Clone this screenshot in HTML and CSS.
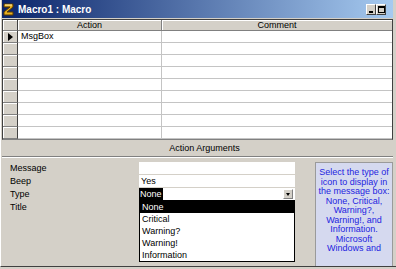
FILE: index.html
```html
<!DOCTYPE html>
<html lang="en">
  <head>
    <meta charset="UTF-8" />
    <title>Macro1 : Macro</title>
    <link rel="stylesheet" href="styles.css">
  </head>
  <body>
    <div class="window">
      <!-- Title bar -->
      <div class="titlebar">
        <svg class="app-icon" width="11" height="13" viewBox="0 0 11 13">
          <path d="M1 1 H10 V4 L4 9 H10 V12 H1 V9 L7 4 H1 Z" fill="#e8b020" stroke="#5a3a00" stroke-width="1" />
          <path d="M2 2 H9" stroke="#fff3b0" stroke-width="1" />
        </svg>
        <span class="title">Macro1 : Macro</span>
        <div class="caption-btns">
          <span class="cap-btn"><span class="min-glyph"></span></span>
          <span class="cap-btn"><span class="max-glyph"></span></span>
        </div>
      </div>

      <!-- Macro grid -->
      <div class="grid">
        <div class="row head">
          <div class="sel"></div>
          <div class="cell action">Action</div>
          <div class="cell comment">Comment</div>
        </div>
        <div class="row">
          <div class="sel"><span class="current"></span></div>
          <div class="cell action">MsgBox</div>
          <div class="cell comment"></div>
        </div>
        <div class="row"><div class="sel"></div><div class="cell action"></div><div class="cell comment"></div></div>
        <div class="row"><div class="sel"></div><div class="cell action"></div><div class="cell comment"></div></div>
        <div class="row"><div class="sel"></div><div class="cell action"></div><div class="cell comment"></div></div>
        <div class="row"><div class="sel"></div><div class="cell action"></div><div class="cell comment"></div></div>
        <div class="row"><div class="sel"></div><div class="cell action"></div><div class="cell comment"></div></div>
        <div class="row"><div class="sel"></div><div class="cell action"></div><div class="cell comment"></div></div>
        <div class="row"><div class="sel"></div><div class="cell action"></div><div class="cell comment"></div></div>
        <div class="row"><div class="sel"></div><div class="cell action"></div><div class="cell comment"></div></div>
      </div>

      <div class="args-title">Action Arguments</div>

      <!-- Arguments pane -->
      <div class="args">
        <div class="arg-labels">
          <div class="arg-label">Message</div>
          <div class="arg-label">Beep</div>
          <div class="arg-label">Type</div>
          <div class="arg-label">Title</div>
        </div>
        <div class="arg-fields">
          <div class="field"></div>
          <div class="field">Yes</div>
          <div class="field combo">
            <span class="selected-text">None</span>
            <span class="drop-btn"><span class="drop-arrow"></span></span>
            <div class="drop-list">
              <div class="drop-item active">None</div>
              <div class="drop-item">Critical</div>
              <div class="drop-item">Warning?</div>
              <div class="drop-item">Warning!</div>
              <div class="drop-item">Information</div>
            </div>
          </div>
          <div class="field"></div>
        </div>
        <div class="hint">
          Select the type of<br>
          icon to display in<br>
          the message box:<br>
          None, Critical,<br>
          Warning?,<br>
          Warning!, and<br>
          Information.<br>
          Microsoft<br>
          Windows and
        </div>
      </div>
    </div>
  </body>
</html>
```

FILE: styles.css
```css
:root {
  --face: #d4d0c8;
  --shadow: #808080;
  --dark: #404040;
  --grid-line: #c4c4c4;
}

* {
  box-sizing: border-box;
}

body {
  margin: 0;
  width: 396px;
  height: 269px;
  overflow: hidden;
  background-color: var(--face);
  font-family: "Liberation Sans", Arial, sans-serif;
  font-size: 9px;
  color: #000;
}

.window {
  height: 267px;
  display: flex;
  flex-direction: column;
  border-left: 1px solid #fff;
  border-bottom: 1px solid var(--dark);
  padding: 0 3px 0 1px;
}

/* Title bar */
.titlebar {
  height: 18px;
  flex-shrink: 0;
  display: flex;
  align-items: center;
  padding-left: 1px;
  background: linear-gradient(to right, #0a246a, #a6caf0);
}

.app-icon {
  display: block;
  margin-right: 4px;
}

.title {
  color: #fff;
  font-weight: bold;
  font-size: 10px;
}

.caption-btns {
  margin-left: auto;
  margin-right: 7px;
  display: flex;
}

.cap-btn {
  width: 10px;
  height: 11px;
  background-color: var(--face);
  border: 1px solid;
  border-color: #fff var(--dark) var(--dark) #fff;
  display: flex;
  align-items: flex-end;
  justify-content: center;
}

.min-glyph {
  width: 4px;
  height: 2px;
  background-color: #000;
  margin-bottom: 1px;
}

.max-glyph {
  width: 7px;
  height: 7px;
  border: 1px solid #000;
  border-top-width: 2px;
  margin-bottom: 1px;
}

/* Grid */
.grid {
  margin-top: 1px;
  border: 1px solid var(--dark);
  border-bottom-color: var(--shadow);
  background-color: #fff;
  flex-shrink: 0;
}

.row {
  display: flex;
  height: 12px;
}

.row.head {
  height: 11px;
  background-color: var(--face);
}

.sel {
  width: 15px;
  flex-shrink: 0;
  background-color: var(--face);
  border-right: 1px solid var(--dark);
  border-bottom: 1px solid var(--shadow);
  box-shadow: inset 1px 1px #fff;
  display: flex;
  align-items: center;
  padding-left: 5px;
}

.current {
  width: 0;
  height: 0;
  border-left: 5px solid #000;
  border-top: 4px solid transparent;
  border-bottom: 4px solid transparent;
}

.cell {
  border-right: 1px solid var(--grid-line);
  border-bottom: 1px solid var(--grid-line);
  padding-left: 3px;
  line-height: 11px;
  white-space: nowrap;
}

.cell.action {
  width: 144px;
  flex-shrink: 0;
}

.cell.comment {
  flex: 1;
  border-right: none;
}

.head .cell {
  text-align: center;
  padding-left: 0;
  line-height: 10px;
  border-right-color: var(--shadow);
  border-bottom-color: var(--shadow);
  box-shadow: inset 1px 1px #fff;
}

/* Arguments */
.args-title {
  height: 17px;
  flex-shrink: 0;
  line-height: 17px;
  text-align: center;
  padding-left: 14px;
  border-bottom: 1px solid var(--shadow);
  box-shadow: 0 1px #fff;
}

.args {
  flex: 1;
  display: flex;
  padding-top: 5px;
  overflow: hidden;
}

.arg-labels {
  width: 137px;
  flex-shrink: 0;
  padding-left: 8px;
}

.arg-label {
  height: 13px;
  line-height: 13px;
}

.arg-fields {
  width: 156px;
  flex-shrink: 0;
}

.field {
  height: 12px;
  margin-bottom: 1px;
  background-color: #fff;
  line-height: 12px;
  padding-left: 2px;
}

.field.combo {
  position: relative;
  display: flex;
  align-items: center;
  padding-left: 0;
}

.selected-text {
  background-color: #000;
  color: #fff;
  height: 12px;
  padding: 0 1px 0 1px;
}

.drop-btn {
  margin: 0 2px 0 auto;
  width: 10px;
  height: 10px;
  background-color: var(--face);
  border: 1px solid;
  border-color: #fff var(--shadow) var(--shadow) #fff;
  display: flex;
  align-items: center;
  justify-content: center;
}

.drop-arrow {
  width: 0;
  height: 0;
  border-top: 3px solid #000;
  border-left: 2px solid transparent;
  border-right: 2px solid transparent;
}

.drop-list {
  position: absolute;
  top: 12px;
  left: 0;
  width: 156px;
  border: 1px solid #000;
  background-color: #fff;
  z-index: 2;
}

.drop-item {
  height: 12px;
  line-height: 12px;
  padding-left: 2px;
}

.drop-item.active {
  background-color: #000;
  color: #fff;
}

.hint {
  margin-left: 20px;
  width: 78px;
  flex-shrink: 0;
  border: 1px solid #9a9a9a;
  background-color: #d5d9ef;
  color: #2424e0;
  text-align: center;
  line-height: 9.5px;
  padding-top: 5px;
  height: 120px;
}
```
